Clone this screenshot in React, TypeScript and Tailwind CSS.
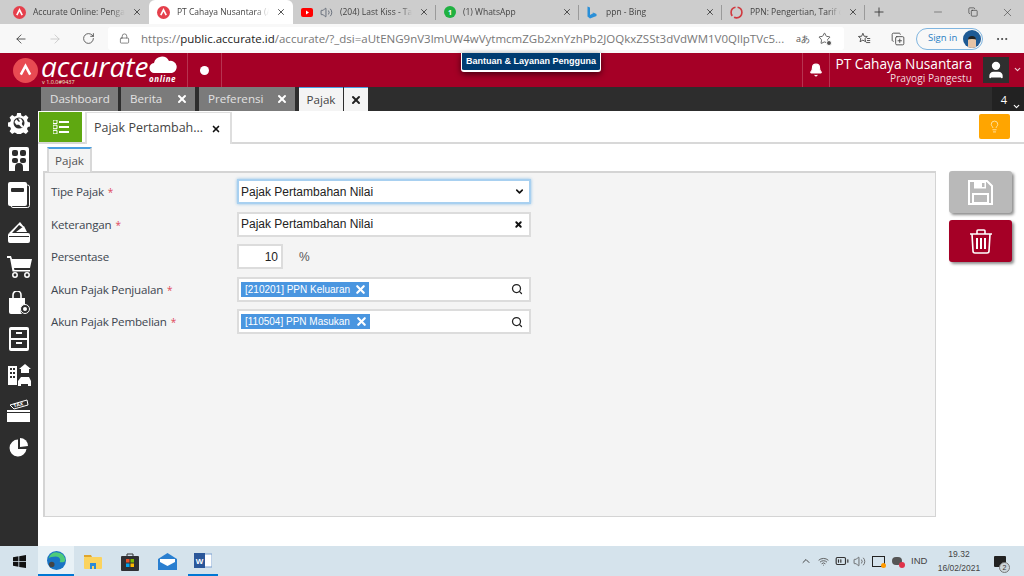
import { ArrowLeft, ArrowRight, RotateCw, Lock, X, Plus, Minus, MoreHorizontal, Volume2, ChevronDown, ChevronUp, Search, Bell, User, Lightbulb, Wifi, BatteryMedium, Star, Copy, CopyPlus } from 'lucide-react';
import { ReactNode } from 'react';

const uiFont = "font-['Open_Sans','Noto_Sans',sans-serif]";

function BrowserTab({ icon, title, width, first, active, speaker, divider }: { icon: ReactNode; title: string; width: string; first?: boolean; active?: boolean; speaker?: boolean; divider?: boolean }) {
    return (
        <div className={`relative h-[24px] flex items-center pr-[7px] gap-[7px] shrink-0 ${first ? 'pl-[13px]' : 'pl-[8px]'} ${width} ${active ? 'bg-white rounded-t-md' : ''}`}>
            {icon}
            {speaker && <Volume2 className="w-[13px] h-[13px] text-gray-700 shrink-0" strokeWidth={1.2} />}
            <span className="flex-1 min-w-0 text-[8.5px] text-[#444] whitespace-nowrap [mask-image:linear-gradient(to_right,black_85%,transparent)]">{title}</span>
            <X className="w-[10px] h-[10px] text-[#333] shrink-0" strokeWidth={2} />
            {divider && <span className="absolute right-0 top-[5px] h-[15px] w-px bg-[#9a9a9a]"></span>}
        </div>
    );
}

function AccurateFavicon() {
    return (
        <svg width="13" height="13" viewBox="0 0 24 24" className="shrink-0">
            <circle cx="12" cy="12" r="12" fill="#e5404c" />
            <path d="M7 17 L12 7 L17 17" fill="none" stroke="#fff" strokeWidth="3" />
        </svg>
    );
}

function DarkTab({ label, width, close = true }: { label: string; width: string; close?: boolean }) {
    return (
        <div className={`h-[24px] bg-[#7b7b7b] flex items-center justify-between pl-[9px] pr-[7px] text-[11.6px] text-[#e2e2e2] ${width}`}>
            <span>{label}</span>
            {close && <X className="w-[12px] h-[12px] text-white" strokeWidth={4} />}
        </div>
    );
}

function SideIcon({ children }: { children: ReactNode }) {
    return <div className="h-[23px] flex items-center justify-center text-white">{children}</div>;
}

function FormRow({ label, required, children }: { label: string; required?: boolean; children: ReactNode }) {
    return (
        <div className="flex items-center h-[25px]">
            <div className="w-[186px] text-[11.6px] tracking-[-0.2px] text-[#3d4650] pt-[1px]">
                {label}
                {required && <span className="text-[#e0485a] ml-[4px] text-[10px]">*</span>}
            </div>
            {children}
        </div>
    );
}

function TagField({ tag, w }: { tag: string; w: string }) {
    return (
        <div className="w-[294px] h-[25px] bg-white border-2 border-[#dcdcdc] flex items-center justify-between pl-[2px] pr-[6px]">
            <div className={`h-[15px] bg-[#4a96e0] text-white text-[10px] flex items-center justify-between pl-[4px] pr-[2px] font-['Liberation_Sans',sans-serif] ${w}`}>
                <span>{tag}</span>
                <X className="w-[13px] h-[13px]" strokeWidth={4} />
            </div>
            <Search className="w-[12px] h-[12px] text-[#222]" strokeWidth={2.5} />
        </div>
    );
}

export default function App() {
    return (
        <div className={`w-[1024px] h-[576px] overflow-hidden flex flex-col bg-white ${uiFont}`}>
            {/* browser tab strip */}
            <div className="h-[24px] bg-[#cdcdcd] flex items-center shrink-0">
                <BrowserTab first width="w-[149px]" icon={<AccurateFavicon />} title="Accurate Online: Pengat" />
                <BrowserTab width="w-[144px]" icon={<AccurateFavicon />} title="PT Cahaya Nusantara (A" active />
                <BrowserTab
                    width="w-[143px]"
                    icon={<svg width="12" height="9" viewBox="0 0 24 18" className="shrink-0"><rect width="24" height="18" rx="4" fill="#f00" /><path d="M10 5l6 4-6 4z" fill="#fff" /></svg>}
                    title="(204) Last Kiss - Taj"
                    speaker
                    divider
                />
                <BrowserTab
                    width="w-[143px]"
                    icon={<svg width="12" height="12" viewBox="0 0 24 24" className="shrink-0"><circle cx="12" cy="12" r="12" fill="#1fb141" /><text x="12" y="17" fontSize="14" fontWeight="700" textAnchor="middle" fill="#fff">1</text></svg>}
                    title="(1) WhatsApp"
                    divider
                />
                <BrowserTab
                    width="w-[143px]"
                    icon={<svg width="10" height="13" viewBox="0 0 20 26" className="shrink-0 mr-[2px]"><path d="M1 1l5 2v15l7-4-3-2 9 4v4L6 25l-5-4z" fill="#2a8fd8" /></svg>}
                    title="ppn - Bing"
                    divider
                />
                <BrowserTab
                    width="w-[143px]"
                    icon={<svg width="13" height="13" viewBox="0 0 24 24" className="shrink-0"><circle cx="12" cy="12" r="10" fill="none" stroke="#d0393f" strokeWidth="3" strokeDasharray="20 4" /></svg>}
                    title="PPN: Pengertian, Tarif d"
                    divider
                />
                <Plus className="w-[14px] h-[14px] text-[#333] ml-[7px]" strokeWidth={1.5} />
                <div className="flex-1"></div>
                <div className="w-[35px] flex justify-center"><Minus className="w-[12px] h-[12px] text-[#333]" strokeWidth={1} /></div>
                <div className="w-[35px] flex justify-center"><Copy className="w-[10px] h-[10px] text-[#333]" strokeWidth={1.5} /></div>
                <div className="w-[34px] flex justify-center"><X className="w-[13px] h-[13px] text-[#333]" strokeWidth={1} /></div>
            </div>

            {/* browser toolbar */}
            <div className="h-[29px] bg-[#f8f8f8] flex items-center shrink-0 relative">
                <div className="w-[108px] flex items-center pl-[14px] gap-[20px] shrink-0">
                    <ArrowLeft className="w-[14px] h-[14px] text-[#444]" strokeWidth={1.5} />
                    <ArrowRight className="w-[14px] h-[14px] text-[#c8c8c8]" strokeWidth={1.5} />
                    <RotateCw className="w-[13px] h-[13px] text-[#444]" strokeWidth={1.5} />
                </div>
                <div className="w-[736px] h-[23px] flex items-center pl-[11px] shrink-0 bg-white rounded-[3px]">
                    <Lock className="w-[11px] h-[11px] text-[#555] shrink-0 mr-[11px]" strokeWidth={1.5} />
                    <span className="w-[641px] shrink-0 text-[11.5px] text-[#777] whitespace-nowrap">
                        https://<span className="text-[#222]">public.accurate.id</span>/accurate/?_dsi=aUtENG9nV3lmUW4wVytmcmZGb2xnYzhPb2JOQkxZSSt3dVdWM1V0QllpTVc5...
                    </span>
                    <span className="ml-[14px] text-[9px] text-[#555] shrink-0">aあ</span>
                    <div className="relative ml-[8px] shrink-0">
                        <Star className="w-[13px] h-[13px] text-[#444]" strokeWidth={1.5} />
                        <span className="absolute -right-[1px] -bottom-[1px] w-[6px] h-[6px] rounded-full bg-[#555] border border-white"></span>
                    </div>
                </div>
                <div className="flex items-center shrink-0">
                    <div className="ml-[14px] flex items-center">
                        <svg width="13" height="13" viewBox="0 0 16 16">
                            <path d="M6 1.500l1.500 3.700 4 .3-3 2.600 1 3.900L6 10l-3.500 2 1-3.900-3-2.600 4-.3z" fill="none" stroke="#444" strokeWidth="1.100" />
                            <path d="M11 8h4M11 10.500h4M10 13h5" stroke="#444" strokeWidth="1.100" />
                        </svg>
                    </div>
                    <CopyPlus className="w-[14px] h-[14px] text-[#444] ml-[20px]" strokeWidth={1.5} />
                    <div className="ml-[11px] w-[67px] h-[22px] rounded-full border border-[#7fb5e0] flex items-center justify-between pl-[11px] pr-[1px] text-[9.5px] text-[#2a7fc4]">
                        <span>Sign in</span>
                        <div className="w-[18px] h-[18px] rounded-full bg-[#1e5a94] flex items-end justify-center overflow-hidden">
                            <div className="w-[8px] h-[12px] bg-[#e6c4a6] rounded-t-full border-t-[3px] border-[#222]"></div>
                        </div>
                    </div>
                    <MoreHorizontal className="w-[14px] h-[14px] text-[#333] ml-[12px]" strokeWidth={1.5} />
                </div>
            </div>

            {/* app header */}
            <div className="h-[34px] bg-[#a50026] flex shrink-0 relative text-white">
                <div className="w-[188px] relative flex items-center pl-[13px] border-r border-[#b73350] shrink-0">
                    <svg width="25" height="25" viewBox="0 0 24 24" className="shrink-0">
                        <circle cx="12" cy="12" r="12" fill="#e84a52" />
                        <path d="M7.500 16 L12 7.500 L16.500 16" fill="none" stroke="#fff" strokeWidth="2.400" />
                    </svg>
                    <span className="ml-[3px] mt-[-8px] text-[28px] font-medium leading-[22px] italic">accurate</span>
                    <svg width="28" height="17" viewBox="0 0 28 17" className="absolute left-[149px] top-[3px]">
                        <path d="M6 17a5 5 0 0 1-1-10 8 8 0 0 1 15-2 6 6 0 0 1 3 12z" fill="#fff" />
                    </svg>
                    <span className="absolute left-[149px] top-[21px] text-[8px] leading-[10px] font-bold italic tracking-[0.6px]">online</span>
                    <span className="absolute left-[42px] top-[26px] text-[5.5px] leading-[7px] text-[#eec]">v 1.0.0#9437</span>
                </div>
                <div className="w-[34px] flex items-center justify-center border-r border-[#b73350] shrink-0">
                    <span className="w-[9px] h-[9px] rounded-full bg-white"></span>
                </div>
                <div className="flex-1"></div>
                <div className="w-[28px] flex items-center justify-center border-l border-r border-[#b73350] shrink-0">
                    <Bell className="w-[14px] h-[14px] text-white fill-white" />
                </div>
                <div className="w-[142px] pt-[2px] flex flex-col items-end shrink-0">
                    <span className="text-[13.7px] leading-[18px] whitespace-nowrap">PT Cahaya Nusantara</span>
                    <span className="text-[10.2px] leading-[11px] text-[#f0d8dd] whitespace-nowrap">Prayogi Pangestu</span>
                </div>
                <div className="ml-[11px] mt-[4px] w-[26px] h-[26px] bg-[#2f2f2f] flex items-center justify-center shrink-0">
                    <User className="w-[20px] h-[20px] text-white fill-white" />
                </div>
                <ChevronDown className="w-[9px] h-[9px] text-white/80 ml-[4px] mt-[12px]" strokeWidth={3} />
                <div className="w-[2px]"></div>
                <div className="absolute left-[461px] top-0 w-[140px] h-[19px] rounded-b-[3px] bg-[#003c71] border-b-2 border-x border-white text-[9px] font-bold flex items-center justify-center shadow-[0_2px_6px_rgba(0,0,0,0.6)] font-['Liberation_Sans',sans-serif]">
                    Bantuan &amp; Layanan Pengguna
                </div>
            </div>

            {/* app tab bar */}
            <div className="h-[24px] bg-[#2d2d2d] flex shrink-0 pl-[41px]">
                <DarkTab label="Dashboard" width="w-[77px]" close={false} />
                <div className="w-[3px]"></div>
                <DarkTab label="Berita" width="w-[74px]" />
                <div className="w-[4px]"></div>
                <DarkTab label="Preferensi" width="w-[96px]" />
                <div className="w-[4px]"></div>
                <div className="w-[44px] h-[24px] bg-[#f4f4f4] border-t border-[#4a9fe0] flex items-center justify-center text-[11.6px] text-[#444]">Pajak</div>
                <div className="w-[24px] ml-px h-[24px] bg-[#f4f4f4] border-t border-[#4a9fe0] flex items-center justify-center">
                    <X className="w-[12px] h-[12px] text-[#222]" strokeWidth={4} />
                </div>
                <div className="flex-1"></div>
                <div className="w-[32px] bg-[#222] flex items-start justify-center relative text-white text-[11px] pt-[5px] pr-[8px]">
                    4
                    <ChevronDown className="absolute right-[3px] bottom-0 w-[9px] h-[9px]" strokeWidth={3} />
                </div>
            </div>

            <div className="flex-1 flex min-h-0">
                {/* sidebar */}
                <div className="w-[38px] bg-[#2d2d2d] flex flex-col gap-[13px] shrink-0">
                    <SideIcon>
                        <svg width="22" height="22" viewBox="0 0 24 24"><path fill="#fff" fillRule="evenodd" d="M10 1h4l.7 3 2.200.9 2.600-1.600 2.800 2.800-1.600 2.600.9 2.200 3 .7v4l-3 .7-.9 2.200 1.600 2.600-2.800 2.800-2.600-1.600-2.200.9-.7 3h-4l-.7-3-2.200-.9-2.600 1.600-2.800-2.800 1.600-2.600-.9-2.200-3-.7v-4l3-.7.9-2.200-1.600-2.600 2.800-2.800 2.600 1.600 2.200-.9zM12 6a6 6 0 1 0 0 12 6 6 0 0 0 0-12z" /><path fill="#fff" d="M9 8l3 3 1-1-2-3 3 0 2 3-1 3 2 3-2 1-3-3-3 0-2-3z" /></svg>
                    </SideIcon>
                    <SideIcon>
                        <svg width="20" height="24" viewBox="0 0 20 24"><path fill="#fff" d="M2 0h16a2 2 0 0 1 2 2v22h-6v-4a4 4 0 0 0-8 0v4H0V2a2 2 0 0 1 2-2z" /><rect x="3" y="3" width="6" height="6" rx="2" fill="#2d2d2d" /><rect x="11" y="3" width="6" height="6" rx="2" fill="#2d2d2d" /><rect x="3" y="11" width="6" height="5" rx="2" fill="#2d2d2d" /><rect x="11" y="11" width="6" height="5" rx="2" fill="#2d2d2d" /></svg>
                    </SideIcon>
                    <SideIcon>
                        <svg width="22" height="26" viewBox="0 0 22 26"><rect x="3" y="3" width="18.500" height="22.500" rx="2" fill="none" stroke="#fff" /><rect width="19" height="24" rx="2" fill="#fff" /><rect x="3" y="6" width="13" height="4" rx="1" fill="#2d2d2d" /></svg>
                    </SideIcon>
                    <SideIcon>
                        <svg width="22" height="22" viewBox="0 0 22 22" className="mt-[3px]"><path fill="#fff" d="M1 12L12 1l4 5-2 0-3-2-7 8zM8 11l8-6 3 6z" /><path fill="#fff" fillRule="evenodd" d="M2 12h18a2 2 0 0 1 2 2v6a2 2 0 0 1-2 2H2a2 2 0 0 1-2-2v-6a2 2 0 0 1 2-2zm-1 3v1h20v-1z" /></svg>
                    </SideIcon>
                    <SideIcon>
                        <svg width="25" height="22" viewBox="0 0 25 22"><path fill="#fff" d="M0 0h4l1 3h20l-2 9H7l.4 2H23v1.500H5.500L3 2H0z" /><circle cx="8" cy="19" r="2.200" fill="none" stroke="#fff" strokeWidth="1.500" /><circle cx="20" cy="19" r="2.200" fill="none" stroke="#fff" strokeWidth="1.500" /></svg>
                    </SideIcon>
                    <SideIcon>
                        <svg width="22" height="24" viewBox="0 0 22 24"><path fill="none" stroke="#fff" strokeWidth="1.600" d="M5 7V4a4 4 0 0 1 8 0v3" /><path fill="#fff" d="M1 7h16v9a4 4 0 0 0-3 7H3a2 2 0 0 1-2-2z" /><circle cx="17" cy="18" r="4.500" fill="#2d2d2d" stroke="#fff" /><circle cx="17" cy="18" r="2" fill="#fff" /></svg>
                    </SideIcon>
                    <SideIcon>
                        <svg width="20" height="24" viewBox="0 0 20 24"><path fill="#fff" fillRule="evenodd" d="M2 0h16a2 2 0 0 1 2 2v20a2 2 0 0 1-2 2H2a2 2 0 0 1-2-2V2a2 2 0 0 1 2-2zm0 3v8h16V3zm0 10v8h16v-8z" /><rect x="7" y="5" width="6" height="2" fill="#fff" /><rect x="7" y="15" width="6" height="2" fill="#fff" /></svg>
                    </SideIcon>
                    <SideIcon>
                        <svg width="25" height="25" viewBox="0 0 25 25"><path fill="#fff" fillRule="evenodd" d="M1 4h9v19H1zm2 2v2h2V6zm3 0v2h2V6zM3 10v2h2v-2zm3 0v2h2v-2zM3 14v2h2v-2zm3 0v2h2v-2z" /><path fill="#fff" d="M12 7l6-5 6 5h-2v4h-8V7zM14 15h8l2 4v5h-3v-2h-7v2h-3v-5z" /></svg>
                    </SideIcon>
                    <SideIcon>
                        <svg width="24" height="24" viewBox="0 0 24 24"><path fill="none" stroke="#fff" d="M3 6l17-5 1 5-14 4z" /><text x="7" y="8.500" fontSize="5" fontWeight="700" fill="#fff" transform="rotate(-14 7 8.500)">TAX</text><rect y="11" width="23" height="2" fill="#fff" /><rect y="14" width="23" height="9" fill="#fff" /></svg>
                    </SideIcon>
                    <SideIcon>
                        <svg width="20" height="20" viewBox="0 0 20 20"><path fill="#fff" d="M9 2.500a8.500 8.500 0 1 0 8.500 9.500H9z" /><path fill="#fff" d="M11 1a8 8 0 0 1 8 8l-8 1z" /></svg>
                    </SideIcon>
                </div>

                {/* page */}
                <div className="flex-1 min-w-0 flex flex-col">
                    <div className="h-[33px] border-b-2 border-[#d8d8d8] flex items-end shrink-0 relative pl-[1px] bg-white">
                        <div className="w-[43px] h-[30px] bg-[#5fa811] flex items-center justify-center self-start mt-[1px]">
                            <svg width="16" height="14" viewBox="0 0 16 14">
                                <path d="M0 0h4v3.500H0zM0 5.200h4v3.500H0zM0 10.400h4v3.500H0z" fill="none" stroke="#fff" strokeWidth="1" />
                                <path d="M6 2h10M6 7h10M6 12h10" stroke="#fff" strokeWidth="1.800" />
                            </svg>
                        </div>
                        <div className="ml-[3px] w-[147px] h-[32px] -mb-[2px] bg-white border-x-2 border-t border-[#dedede] flex items-center justify-between pl-[7px] pr-[9px] text-[12.5px] text-[#444]">
                            <span>Pajak Pertambah...</span>
                            <X className="w-[10px] h-[10px] text-[#111]" strokeWidth={4} />
                        </div>
                        <div className="flex-1"></div>
                        <div className="mr-[14px] mb-[3px] w-[31px] h-[25px] bg-[#ffa500] rounded-[2px] flex items-center justify-center">
                            <Lightbulb className="w-[13px] h-[13px] text-[#ffe9b0]" strokeWidth={1.6} />
                        </div>
                    </div>

                    <div className="flex-1 min-h-0 flex pl-[5px] pt-[3px] pb-[29px]">
                        <div className="w-[893px] flex flex-col shrink-0">
                            <div className="flex pl-[4px] shrink-0">
                                <div className="w-[45px] h-[25px] -mb-px relative bg-[#f4f4f4] border-t-2 border-t-[#4a9fe0] border-x-2 border-x-[#d8d8d8] flex items-center justify-center text-[11.6px] text-[#555]">Pajak</div>
                            </div>
                            <div className="flex-1 bg-[#f4f4f4] border-2 border-[#d4d4d4] border-r border-b pl-[6px] pt-[6px] flex flex-col gap-[7.5px]">
                                <FormRow label="Tipe Pajak" required>
                                    <div className="w-[294px] h-[25px] bg-white border-2 border-[#a8d0f0] shadow-[0_0_3px_rgba(74,159,224,0.6)] flex items-center justify-between pl-[2px] pr-[4px] text-[12px] text-[#222] font-['Liberation_Sans',sans-serif]">
                                        <span>Pajak Pertambahan Nilai</span>
                                        <ChevronDown className="w-[11px] h-[11px] text-[#111]" strokeWidth={3.5} />
                                    </div>
                                </FormRow>
                                <FormRow label="Keterangan" required>
                                    <div className="w-[294px] h-[25px] bg-white border-2 border-[#dcdcdc] flex items-center justify-between pl-[2px] pr-[6px] text-[12px] text-[#222] font-['Liberation_Sans',sans-serif]">
                                        <span>Pajak Pertambahan Nilai</span>
                                        <X className="w-[9px] h-[9px] text-[#111]" strokeWidth={5} />
                                    </div>
                                </FormRow>
                                <FormRow label="Persentase">
                                    <div className="w-[46px] h-[25px] bg-white border-2 border-[#dcdcdc] flex items-center justify-end pr-[3px] text-[12px] text-[#222] font-['Liberation_Sans',sans-serif]">10</div>
                                    <span className="ml-[16px] text-[12px] text-[#555] font-['Liberation_Sans',sans-serif]">%</span>
                                </FormRow>
                                <FormRow label="Akun Pajak Penjualan" required>
                                    <TagField tag="[210201] PPN Keluaran" w="w-[128px]" />
                                </FormRow>
                                <FormRow label="Akun Pajak Pembelian" required>
                                    <TagField tag="[110504] PPN Masukan" w="w-[129px]" />
                                </FormRow>
                            </div>
                        </div>
                        <div className="ml-[13px] flex flex-col gap-[7px] pt-[24px] shrink-0">
                            <div className="w-[63px] h-[42px] rounded-[3px] bg-[#b9b9b9] shadow-[2px_2px_3px_rgba(0,0,0,0.45)] flex items-center justify-center">
                                <svg width="25" height="25" viewBox="0 0 25 25">
                                    <path d="M1 1h18l5 5v18H1z" fill="none" stroke="#fff" strokeWidth="2" />
                                    <path d="M6 1.500h12v7H6z" fill="#fff" />
                                    <path d="M14 3h2.500v4H14z" fill="#b9b9b9" />
                                    <path d="M5 14h15v9H5z" fill="none" stroke="#fff" strokeWidth="2" />
                                </svg>
                            </div>
                            <div className="w-[63px] h-[42px] rounded-[3px] bg-[#a50026] shadow-[2px_2px_3px_rgba(0,0,0,0.45)] flex items-center justify-center">
                                <svg width="24" height="25" viewBox="0 0 24 25">
                                    <path d="M1 5h22M8 5V2a1 1 0 0 1 1-1h6a1 1 0 0 1 1 1v3" fill="none" stroke="#fff" strokeWidth="1.600" />
                                    <path d="M3 5l1 17a2 2 0 0 0 2 2h12a2 2 0 0 0 2-2l1-17" fill="none" stroke="#fff" strokeWidth="1.600" />
                                    <path d="M8 9v11M12 9v11M16 9v11" stroke="#fff" strokeWidth="2" />
                                </svg>
                            </div>
                        </div>
                    </div>
                </div>
            </div>

            {/* windows taskbar */}
            <div className="h-[30px] bg-[#d5e3ec] flex items-center shrink-0 font-['Liberation_Sans',sans-serif]">
                <div className="w-[38px] flex justify-center">
                    <svg width="13" height="13" viewBox="0 0 24 24"><path fill="#111" d="M0 4l10-1.500V11.500H0zM11.500 2.200L24 0v11.500H11.500zM0 13h10v8.500L0 20zM11.500 13H24v11l-12.500-2z" /></svg>
                </div>
                <div className="w-[36px] h-[30px] bg-[#e8f1f6] border-b-2 border-[#0078d4] flex items-center justify-center">
                    <svg width="19" height="19" viewBox="0 0 24 24"><circle cx="12" cy="12" r="12" fill="#1a74c4" /><path d="M2 9a11 11 0 0 1 21 1c1 4-4 5-7 4 2-3 0-7-5-7-4 0-7 1-9 2z" fill="#4ecb7a" /><circle cx="6" cy="17" r="3.500" fill="#444" /></svg>
                </div>
                <div className="w-[37px] flex justify-center">
                    <svg width="18" height="15" viewBox="0 0 18 15"><path fill="#e0a52c" d="M0 1h7l1 2h-8z" /><rect y="3" width="18" height="12" rx="1" fill="#fbd35e" /><path fill="#2c8ad8" d="M6 9h6v6h-2v-3H8v3H6z" /></svg>
                </div>
                <div className="w-[37px] flex justify-center">
                    <svg width="18" height="19" viewBox="0 0 18 19"><path fill="none" stroke="#333" d="M6 5V2h6v3" /><rect y="4" width="18" height="15" rx="1" fill="#2f2f33" /><rect x="5" y="7" width="3.500" height="3.500" fill="#e8502a" /><rect x="9.500" y="7" width="3.500" height="3.500" fill="#7fba00" /><rect x="5" y="11.500" width="3.500" height="3.500" fill="#00a4ef" /><rect x="9.500" y="11.500" width="3.500" height="3.500" fill="#ffb900" /></svg>
                </div>
                <div className="w-[38px] flex justify-center">
                    <svg width="19" height="17" viewBox="0 0 19 17"><path fill="#2a7fd0" d="M0 6L9.500 0 19 6v11H0z" /><path fill="#fff" d="M2 6h15v3l-7.500 4L2 9z" /></svg>
                </div>
                <div className="w-[30px] ml-[2px] h-[30px] border-b-2 border-[#0078d4] flex items-center justify-center">
                    <svg width="18" height="17" viewBox="0 0 18 17"><rect x="7" y="2" width="11" height="13" fill="#fff" stroke="#7aa0d0" /><rect y="1" width="11" height="15" fill="#2b579a" /><text x="5.500" y="12" fontSize="8" fontWeight="700" textAnchor="middle" fill="#fff">W</text></svg>
                </div>
                <div className="flex-1"></div>
                <div className="flex items-center text-[#333]">
                    <ChevronUp className="w-[12px] h-[12px]" strokeWidth={1.8} />
                    <Wifi className="w-[11px] h-[11px] ml-[6px] text-[#555]" strokeWidth={2} />
                    <BatteryMedium className="w-[14px] h-[14px] ml-[6px]" strokeWidth={2} />
                    <Volume2 className="w-[13px] h-[13px] ml-[4px] text-[#555]" strokeWidth={1.5} />
                    <div className="relative ml-[6px] w-[13px] h-[11px] border border-[#222]">
                        <span className="absolute -right-[2px] -bottom-[2px] w-[5px] h-[5px] bg-[#ff9a00] rounded-full"></span>
                    </div>
                    <div className="relative ml-[7px] w-[10px] h-[8px] bg-[#555] rounded-full">
                        <span className="absolute -right-[3px] -bottom-[3px] w-[6px] h-[6px] bg-[#e0334a] rounded-full"></span>
                    </div>
                    <span className="ml-[9px] w-[16px] text-[9.5px] text-[#444] whitespace-nowrap">IND</span>
                    <div className="ml-[11px] w-[42px] flex flex-col items-center text-[8.5px] leading-[14px] text-[#444]">
                        <span>19.32</span>
                        <span>16/02/2021</span>
                    </div>
                    <div className="relative ml-[14px] mr-[18px] w-[12px] h-[11px] bg-[#222] rounded-[1px]">
                        <span className="absolute -right-[4px] -bottom-[6px] w-[11px] h-[11px] rounded-full bg-[#ccd5da] border border-[#777] text-[7px] leading-[9px] text-center text-[#333]">2</span>
                    </div>
                </div>
            </div>
        </div>
    );
}
